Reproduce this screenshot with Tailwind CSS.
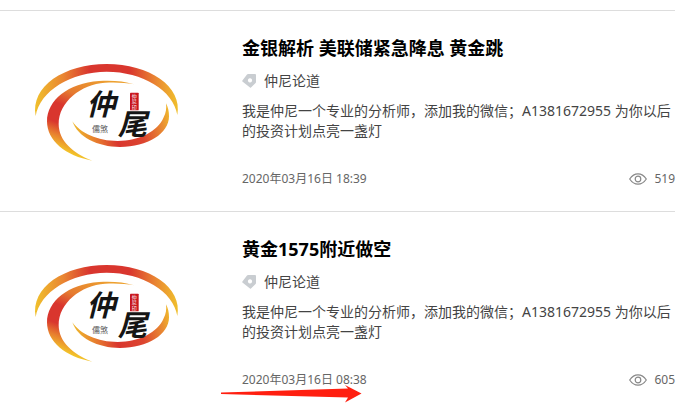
<!DOCTYPE html>
<html lang="zh-CN">
<head>
    <meta charset="UTF-8">
    <meta name="viewport" content="width=device-width, initial-scale=1.0">
    <title>仲尼论道</title>
    <script src="https://cdn.jsdelivr.net/npm/@tailwindcss/browser@4"></script>
</head>
<body class="bg-white text-[#444] font-['Noto_Sans','Noto_Sans_CJK_SC',sans-serif]">
    <!-- Shared icons -->
    <svg class="absolute size-0" aria-hidden="true">
        <defs>
            <linearGradient id="swoosh-top" x1="0" x2="1" y1="0" y2="0">
                <stop offset="0" stop-color="#f0c02c"/>
                <stop offset=".2" stop-color="#e98432"/>
                <stop offset=".38" stop-color="#d9362e"/>
                <stop offset=".66" stop-color="#d9362e"/>
                <stop offset=".84" stop-color="#e98432"/>
                <stop offset="1" stop-color="#f0c02c"/>
            </linearGradient>
            <linearGradient id="swoosh-left" gradientUnits="userSpaceOnUse" x1="260" y1="80" x2="170" y2="310">
                <stop offset="0" stop-color="#eda02f"/>
                <stop offset=".3" stop-color="#e57a30"/>
                <stop offset=".48" stop-color="#d9362e"/>
                <stop offset=".7" stop-color="#d9362e"/>
                <stop offset=".84" stop-color="#e8802f"/>
                <stop offset="1" stop-color="#f3c72a"/>
            </linearGradient>
            <linearGradient id="swoosh-bottom" gradientUnits="userSpaceOnUse" x1="142" y1="230" x2="430" y2="160">
                <stop offset="0" stop-color="#f0c02c"/>
                <stop offset=".25" stop-color="#e5702f"/>
                <stop offset=".42" stop-color="#d9362e"/>
                <stop offset=".68" stop-color="#dc4530"/>
                <stop offset=".9" stop-color="#e98c32"/>
                <stop offset="1" stop-color="#f0b82c"/>
            </linearGradient>
        </defs>
        <symbol id="swooshes" viewBox="0 0 495 345">
            <path fill="url(#swoosh-top)" d="M32 183C16 94 118 27 245 27C372 27 474 94 457 180C446 106 352 50 245 50C138 50 44 108 32 183Z"/>
            <path fill="url(#swoosh-left)" d="M327 88C296 78 262 76 222 78C130 84 66 136 66 199C66 257 122 303 202 317C144 295 101 257 101 207C101 140 168 88 240 83C272 81 302 83 327 88Z"/>
            <path fill="url(#swoosh-bottom)" d="M142 199C158 246 218 276 285 276C368 276 432 236 432 184C432 169 429 156 423 145C425 160 423 174 416 187C398 230 342 258 278 258C218 258 166 235 142 199Z"/>
            <rect x="315" y="113" width="26" height="53" rx="2" fill="#c8161d"/>
        </symbol>
        <symbol id="tag" viewBox="0 0 14 14">
            <path fill="#c9cdd1" fill-rule="evenodd" d="M6 0H13Q14 0 14 1V8Q14 8.500 13.600 9L9 13.500Q8.500 14 8 13.500L.400 7.500Q0 7 .400 6.500L5 .500Q5.500 0 6 0ZM8 4.300a2.100 2.100 0 1 0 .01 0Z"/>
        </symbol>
        <symbol id="eye" viewBox="0 0 18 12">
            <g fill="none" stroke="#888">
                <path stroke-width="1.200" d="M.7 6C3 2.500 5.800 .8 9 .8S15 2.500 17.300 6C15 9.500 12.200 11.200 9 11.200S3 9.500 .7 6Z"/>
                <circle cx="9" cy="6" r="2.800" stroke-width="1.200"/>
            </g>
        </symbol>
    </svg>

    <!-- Article list -->
    <main class="pt-2.5 pr-4">
        <article class="flex gap-[52px] border-t border-[#ddd] pl-[25px] pt-[23px] pb-[22px]">
            <a href="#" class="shrink-0 pt-[21px]" aria-label="仲尼论道">
                <svg class="w-[165px] h-[115px]" viewBox="0 0 495 345">
                    <use href="#swooshes"/>
                    <text x="184" y="180" font-size="88" font-weight="700" font-style="italic" fill="#151515">仲</text>
                    <text x="278" y="240" font-size="88" font-weight="700" font-style="italic" fill="#151515">尾</text>
                    <text x="201" y="230" font-size="24" fill="#555">儒煞</text>
                    <text x="320" y="128" font-size="15" fill="#fff">仲</text>
                    <text x="320" y="145" font-size="15" fill="#fff">尼</text>
                    <text x="320" y="162" font-size="15" fill="#fff">印</text>
                </svg>
            </a>
            <div class="flex-1 min-w-0">
                <h2 class="text-lg leading-7 font-bold text-black"><a href="#">金银解析 美联储紧急降息 黄金跳</a></h2>
                <p class="flex items-center gap-2 mt-[9px] text-sm leading-5">
                    <svg class="size-3.5"><use href="#tag"/></svg>
                    <a href="#">仲尼论道</a>
                </p>
                <p class="mt-2.5 text-sm leading-5">我是仲尼一个专业的分析师，添加我的微信；A1381672955 为你以后的投资计划点亮一盏灯</p>
                <div class="flex items-center justify-between mt-7 text-xs leading-5 text-[#666]">
                    <time datetime="2020-03-16T18:39">2020年03月16日 18:39</time>
                    <span class="flex items-center gap-[7px]">
                        <svg class="w-[18px] h-3"><use href="#eye"/></svg>
                        519
                    </span>
                </div>
            </div>
        </article>

        <article class="relative flex gap-[52px] border-t border-[#ddd] pl-[25px] pt-[23px] pb-4">
            <a href="#" class="shrink-0 pt-[21px]" aria-label="仲尼论道">
                <svg class="w-[165px] h-[115px]" viewBox="0 0 495 345">
                    <use href="#swooshes"/>
                    <text x="184" y="180" font-size="88" font-weight="700" font-style="italic" fill="#151515">仲</text>
                    <text x="278" y="240" font-size="88" font-weight="700" font-style="italic" fill="#151515">尾</text>
                    <text x="201" y="230" font-size="24" fill="#555">儒煞</text>
                    <text x="320" y="128" font-size="15" fill="#fff">仲</text>
                    <text x="320" y="145" font-size="15" fill="#fff">尼</text>
                    <text x="320" y="162" font-size="15" fill="#fff">印</text>
                </svg>
            </a>
            <div class="flex-1 min-w-0">
                <h2 class="text-lg leading-7 font-bold text-black"><a href="#">黄金1575附近做空</a></h2>
                <p class="flex items-center gap-2 mt-[9px] text-sm leading-5">
                    <svg class="size-3.5"><use href="#tag"/></svg>
                    <a href="#">仲尼论道</a>
                </p>
                <p class="mt-2.5 text-sm leading-5">我是仲尼一个专业的分析师，添加我的微信；A1381672955 为你以后的投资计划点亮一盏灯</p>
                <div class="flex items-center justify-between mt-7 text-xs leading-5 text-[#666]">
                    <time datetime="2020-03-16T08:38">2020年03月16日 08:38</time>
                    <span class="flex items-center gap-[7px]">
                        <svg class="w-[18px] h-3"><use href="#eye"/></svg>
                        605
                    </span>
                </div>
            </div>
            <!-- Arrow under the date -->
            <svg class="absolute left-[221px] top-[172px] w-[141px] h-[19px]" viewBox="0 0 141 19">
                <path fill="#ff1f10" d="M0 8.500L127 4.500L124 1L140.500 9.500L124 18.500L127 13.500L0 10Z"/>
            </svg>
        </article>
    </main>
</body>
</html>
